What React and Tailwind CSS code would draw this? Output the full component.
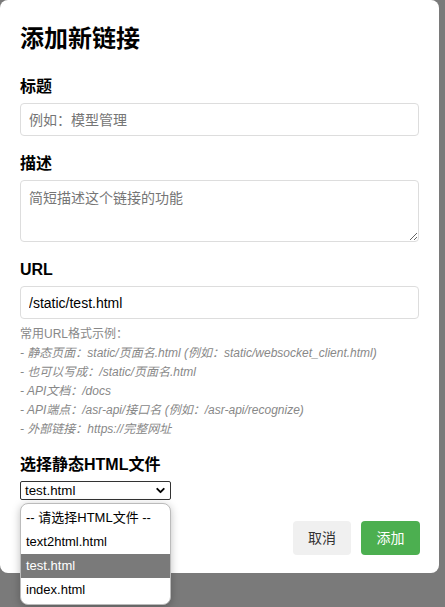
import { ChevronDown } from "lucide-react";

const font = { fontFamily: '"Liberation Sans", Arial, "Noto Sans CJK SC", sans-serif' };

const helpLines = [
  "- 静态页面：static/页面名.html (例如：static/websocket_client.html)",
  "- 也可以写成：/static/页面名.html",
  "- API文档：/docs",
  "- API端点：/asr-api/接口名 (例如：/asr-api/recognize)",
  "- 外部链接：https://完整网址",
];

const options = ["-- 请选择HTML文件 --", "text2html.html", "test.html", "index.html"];

const App = () => {
  return (
    <div className="w-[445px] h-[607px] bg-[#7a7a7a] relative overflow-hidden" style={font}>
      {/* Modal card */}
      <div className="w-[439px] h-[573px] bg-white rounded-lg px-5 pt-[27px] text-black">
        <h2 className="text-[24px] leading-[24px] font-bold">添加新链接</h2>

        <div className="mt-[28px]">
          <label className="block text-[16px] leading-[16px] font-bold">标题</label>
          <input
            className="mt-2 w-full h-[33px] px-2 text-[14px] border border-[#ddd] rounded placeholder:text-[#757575] outline-none"
            placeholder="例如：模型管理"
          />
        </div>

        <div className="mt-5">
          <label className="block text-[16px] leading-[16px] font-bold">描述</label>
          <textarea
            className="block mt-2 w-full h-[62px] px-2 py-[7px] text-[14px] leading-[20px] border border-[#ddd] rounded placeholder:text-[#757575] outline-none"
            placeholder="简短描述这个链接的功能"
          />
        </div>

        <div className="mt-5">
          <label className="block text-[16px] leading-[16px] font-bold">URL</label>
          <input
            className="mt-2 w-full h-[33px] px-2 text-[14px] border border-[#ddd] rounded outline-none"
            defaultValue="/static/test.html"
          />
          <div className="mt-[6px] text-[12px] leading-[19px] text-[#888]">
            <div>常用URL格式示例：</div>
            {helpLines.map((line) => (
              <div key={line} className="italic">
                {line}
              </div>
            ))}
          </div>
        </div>

        <div className="mt-[18px]">
          <label className="block text-[16px] leading-[16px] font-bold">选择静态HTML文件</label>
          <div className="mt-2 w-[151px] h-[19px] border border-[#333] rounded-[2px] flex items-center justify-between pl-[4px] pr-[3px] text-[13.33px]">
            <span>test.html</span>
            <ChevronDown size={13} strokeWidth={3.5} />
          </div>
        </div>

        <div className="mt-[21px] flex justify-end gap-[10px] -mr-px">
          <button className="h-[34px] w-[58px] bg-[#f0f0f0] rounded text-[14px] text-[#333]">取消</button>
          <button className="h-[34px] w-[59px] bg-[#4caf50] rounded text-[14px] text-white">添加</button>
        </div>
      </div>

      {/* Open native select list */}
      <div className="absolute left-[20px] top-[503px] w-[151px] bg-white border border-[#bbb] rounded-lg shadow-[0_2px_8px_rgba(0,0,0,0.25)] overflow-hidden py-[2px] text-[13px]">
        {options.map((opt) => (
          <div
            key={opt}
            className={`h-[24px] leading-[24px] px-[5px] ${opt === "test.html" ? "bg-[#7a7a7a] text-white" : "text-black"}`}
          >
            {opt}
          </div>
        ))}
      </div>
    </div>
  );
};

export default App;
